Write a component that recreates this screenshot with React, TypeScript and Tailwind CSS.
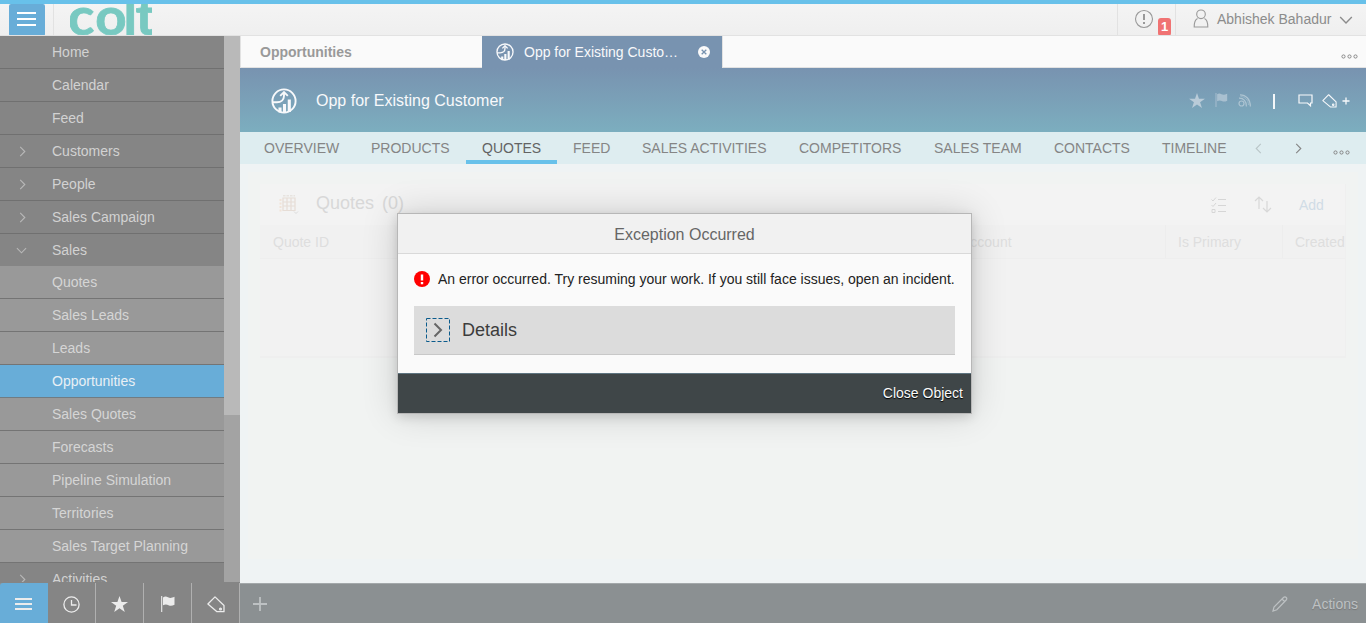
import type { ReactNode } from 'react';

type MenuItem = { label: string; kind: 'top' | 'sub' | 'active'; arrow?: 'right' | 'down' };

const menu: MenuItem[] = [
  { label: 'Home', kind: 'top' },
  { label: 'Calendar', kind: 'top' },
  { label: 'Feed', kind: 'top' },
  { label: 'Customers', kind: 'top', arrow: 'right' },
  { label: 'People', kind: 'top', arrow: 'right' },
  { label: 'Sales Campaign', kind: 'top', arrow: 'right' },
  { label: 'Sales', kind: 'top', arrow: 'down' },
  { label: 'Quotes', kind: 'sub' },
  { label: 'Sales Leads', kind: 'sub' },
  { label: 'Leads', kind: 'sub' },
  { label: 'Opportunities', kind: 'active' },
  { label: 'Sales Quotes', kind: 'sub' },
  { label: 'Forecasts', kind: 'sub' },
  { label: 'Pipeline Simulation', kind: 'sub' },
  { label: 'Territories', kind: 'sub' },
  { label: 'Sales Target Planning', kind: 'sub' },
  { label: 'Activities', kind: 'top', arrow: 'right' },
];

const sections = [
  { label: 'OVERVIEW', width: 'w-[107px]' },
  { label: 'PRODUCTS', width: 'w-[111px]' },
  { label: 'QUOTES', width: 'w-[91px]' },
  { label: 'FEED', width: 'w-[69px]' },
  { label: 'SALES ACTIVITIES', width: 'w-[157px]' },
  { label: 'COMPETITORS', width: 'w-[135px]' },
  { label: 'SALES TEAM', width: 'w-[120px]' },
  { label: 'CONTACTS', width: 'w-[108px]' },
  { label: 'TIMELINE', width: 'w-[96px]' },
];

function Hamburger({ className }: { className: string }) {
  return (
    <svg className={className} viewBox="0 0 19 15" fill="none" stroke="currentColor" strokeWidth="2">
      <path d="M0 1h19M0 7h19M0 13h19" />
    </svg>
  );
}

function Chevron({ dir, className }: { dir: 'right' | 'left' | 'down'; className: string }) {
  const d = dir === 'right' ? 'M3.5 1l5 5-5 5' : dir === 'left' ? 'M8.5 1l-5 5 5 5' : 'M1 3.5l5 5 5-5';
  return (
    <svg className={className} viewBox="0 0 12 12" fill="none" stroke="currentColor" strokeWidth="1.2">
      <path d={d} />
    </svg>
  );
}

function Star({ className }: { className: string }) {
  return (
    <svg className={className} viewBox="0 0 17 16" fill="currentColor">
      <path d="M8.5 0l2.1 6H17l-5.2 3.8L13.8 16 8.5 12.2 3.2 16l2-6.2L0 6h6.4z" />
    </svg>
  );
}

function Flag({ className }: { className: string }) {
  return (
    <svg className={className} viewBox="0 0 14 16">
      <path d="M.7 0v16" stroke="currentColor" strokeWidth="1.1" />
      <path d="M2 1.5c2-1.5 3.5-.9 5-.2s3.5 1 6.5-.5v8c-2.5 1.400-4.500 1.200-6 .4S4 8.200 2 9.300z" fill="currentColor" />
    </svg>
  );
}

function Tag({ className }: { className: string }) {
  return (
    <svg className={className} viewBox="0 0 18 17" fill="none" stroke="currentColor" strokeWidth="1.3">
      <path d="M.9 8L8 .9l9 8.600v6.200h-7z" strokeLinejoin="round" />
      <circle cx="13.500" cy="13" r=".9" />
    </svg>
  );
}

function OpportunityIcon({ className }: { className: string }) {
  return (
    <svg className={className} viewBox="0 0 26 26" fill="none" stroke="currentColor">
      <circle cx="13" cy="13" r="11.600" strokeWidth="1.900" />
      <path d="M1.500 14.200h4.500c4 0 7-2.500 7-6.500V5" strokeWidth="1.900" />
      <path d="M9.200 7.800L13 4l3.800 3.800" strokeWidth="1.900" />
      <path d="M9 19.500v5M13.500 16v8.500M18.300 11.500V24" strokeWidth="3.100" />
    </svg>
  );
}

function Dots({ className }: { className: string }) {
  return (
    <svg className={className} viewBox="0 0 17 5" fill="none" stroke="currentColor" strokeWidth="1">
      <circle cx="2.500" cy="2.500" r="1.600" />
      <circle cx="8.500" cy="2.500" r="1.600" />
      <circle cx="14.500" cy="2.500" r="1.600" />
    </svg>
  );
}

function TopBar() {
  return (
    <header className="flex h-9 shrink-0 overflow-hidden border-b border-t-4 border-b-[#e2e2e2] border-t-[#68c1ea] bg-gradient-to-b from-[#f4f4f4] to-[#efefef]">
      <div className="flex w-[54px] shrink-0 border-r border-[#e2e2e2] pl-[9px]">
        <button className="flex h-8 w-9 rounded-[2px] bg-[#68add8] pl-2 pt-2 text-white">
          <Hamburger className="h-[15px] w-[19px]" />
        </button>
      </div>
      <div className="ml-4 h-[32px] w-[82px] overflow-hidden">
        <svg className="block h-8 w-[82px]" viewBox="0 0 82 32">
          <text
            x="-2 24 51 62.500"
            y="31"
            transform="scale(1.05 1)"
            fontFamily="Lato, sans-serif"
            fontSize="52"
            fontWeight="700"
            fill="#78c9c1"
            stroke="#78c9c1"
            strokeWidth=".8"
          >
            colt
          </text>
        </svg>
      </div>
      <div className="flex-1" />
      <div className="flex w-[59px] border-x border-[#e2e2e2] pl-4">
        <svg className="mt-[5px] size-5 text-[#999]" viewBox="0 0 20 20" fill="none" stroke="currentColor">
          <circle cx="10" cy="10" r="8.500" strokeWidth="1.100" />
          <path d="M10 5v6M10 13v2" strokeWidth="2" />
        </svg>
        <span className="ml-1 mt-[14px] h-[18px] w-[13px] rounded-[3px] bg-[#f07373] text-center text-[13px] font-bold leading-[18px] text-white">1</span>
      </div>
      <div className="flex w-[190px] pl-[17px] text-[#8c8c8c]">
        <svg className="mt-[5px] h-[19px] w-4 text-[#999]" viewBox="0 0 16 19" fill="none" stroke="currentColor" strokeWidth="1.100">
          <circle cx="8" cy="5.300" r="4.300" />
          <path d="M4.500 9.600C2 10.800 1.200 12.500 1.200 18h13.600c0-5.500-.8-7.200-3.300-8.400" />
        </svg>
        <span className="ml-[7px] w-[118px] whitespace-nowrap pl-px text-sm leading-[31px]">Abhishek Bahadur</span>
        <Chevron dir="down" className="ml-[5px] mt-[9px] size-[14px]" />
      </div>
    </header>
  );
}

function Sidebar() {
  return (
    <nav className="flex h-[547px] w-60 shrink-0 bg-[#858585]">
      <ul className="h-[546px] w-56 overflow-hidden">
        {menu.map((item) => (
          <li
            key={item.label}
            className={
              'flex text-sm leading-8 ' +
              (item.label === 'Sales' ? 'h-8 ' : 'h-[33px] border-b ') +
              (item.kind === 'active'
                ? 'border-[#707c83] bg-[#68add8] text-[#e8f0f5]'
                : item.kind === 'sub'
                  ? 'border-[#747474] bg-[#999] text-[#d5d5d5]'
                  : 'border-[#707070] bg-[#858585] text-[#d2d2d2]')
            }
          >
            <span className={'flex w-[52px] items-center ' + (item.arrow === 'down' ? 'pl-4' : 'pl-[17px] pt-px')}>
              {item.arrow && <Chevron dir={item.arrow} className="size-[11px] text-[#b8b8b8]" />}
            </span>
            {item.label}
          </li>
        ))}
      </ul>
      <div className="h-[546px] w-4 bg-[#a3a3a3]">
        <div className="h-[379px] bg-[#b9b9b9]" />
      </div>
    </nav>
  );
}

function TabStrip() {
  return (
    <div className="flex h-8 shrink-0 text-sm">
      <div className="w-[242px] border-b border-l border-[#e2e2e2] bg-[#fafafa] pl-[19px] font-bold leading-8 text-[#999]">Opportunities</div>
      <div className="flex w-[240px] items-center bg-[#7893b0] pl-[14px] text-[#f8f9fb]">
        <OpportunityIcon className="size-[18px]" />
        <span className="ml-[10px] w-[162px] whitespace-nowrap leading-8">Opp for Existing Custo…</span>
        <svg className="ml-3 size-3" viewBox="0 0 12 12">
          <circle cx="6" cy="6" r="6" fill="#fafafa" />
          <path d="M3.700 3.700l4.600 4.600M8.300 3.700L3.700 8.300" stroke="#7893b0" strokeWidth="1.300" />
        </svg>
      </div>
      <div className="flex flex-1 justify-end border-b border-l border-[#e2e2e2] bg-[#fafafa] pr-2 pt-[18px] text-[#888]">
        <Dots className="h-[5px] w-[17px]" />
      </div>
    </div>
  );
}

function ObjectHeader() {
  return (
    <div className="flex h-16 shrink-0 items-center bg-gradient-to-b from-[#7893b0] to-[#7caebf] pl-[31px] text-[#f8f9fb]">
      <OpportunityIcon className="mt-[2px] size-[26px]" />
      <h1 className="ml-[19px] flex-1 pt-px text-base">Opp for Existing Customer</h1>
      <div className="flex w-[177px] items-center">
        <Star className="h-[15px] w-4 text-[#b9cbd8]" />
        <Flag className="ml-2.5 h-[14px] w-[13px] text-[#a9c0d0]" />
        <svg className="ml-[10px] mt-px size-[13px] text-[#adc4d2]" viewBox="0 0 13 13" fill="none" stroke="currentColor" strokeWidth="1.200">
          <circle cx="3.500" cy="9.500" r="2.500" />
          <path d="M1 4.200c4.500-.2 7.700 3.500 7.400 8.300M2 .8C8 .8 12.400 5.500 12.400 12.500" />
          <path d="M2.500 2.500C7 2.700 10.300 6 10.500 11" strokeWidth=".6" />
        </svg>
        <span className="ml-[22px] mt-[2px] h-[15px] w-[2px] bg-[#f4f7f9]" />
        <svg className="ml-[23px] h-[13px] w-[15px]" viewBox="0 0 15 13" fill="none" stroke="currentColor" strokeWidth="1.200">
          <path d="M1 1h13v8h-1.500v2.800L9.500 9H1z" />
        </svg>
        <Tag className="ml-[9px] mt-px h-[14px] w-[15px]" />
        <svg className="ml-[5px] mt-[2px] size-2" viewBox="0 0 8 8" stroke="currentColor" strokeWidth="1.300">
          <path d="M4 0.500v7M.5 4h7" />
        </svg>
      </div>
    </div>
  );
}

function SectionNav() {
  return (
    <div className="flex h-8 shrink-0 bg-[#deedf0] pl-2 text-sm leading-8 text-[#858585]">
      {sections.map((s) => (
        <div
          key={s.label}
          className={
            'shrink-0 whitespace-nowrap pl-4 ' +
            s.width +
            (s.label === 'QUOTES' ? ' border-b-4 border-[#68c1ea] text-[#636363]' : '')
          }
        >
          {s.label}
        </div>
      ))}
      <Chevron dir="left" className="ml-[11px] mt-[11px] size-[11px] text-[#b9c5c7]" />
      <Chevron dir="right" className="ml-[29px] mt-[11px] size-[11px] text-[#858585]" />
      <Dots className="ml-[29px] mt-[18px] h-[5px] w-[17px] text-[#858585]" />
    </div>
  );
}

function HeaderCell({ className, children }: { className: string; children?: ReactNode }) {
  return <div className={'h-full shrink-0 overflow-hidden whitespace-nowrap border-r border-[#ededed] ' + className}>{children}</div>;
}

function QuotesPanel() {
  return (
    <main className="flex-1 bg-[#eff3f4] px-2 pt-2 pb-6">
      <div className="h-full bg-[#f1f3f2] px-3 pt-3">
        <section className="h-[174px] w-[1086px] overflow-hidden border-b-2 border-r border-[#efefef] bg-[#f2f2f2]">
          <div className="flex h-[41px] bg-[#f3f3f3] pl-[19px]">
            <svg className="mt-[11px] h-[20px] w-[21px]" viewBox="0 0 21 20" fill="none">
              <path d="M1.500 4v13" stroke="#f1e3d8" strokeWidth="2" strokeDasharray="2 1.500" />
              <path d="M4 .8h12" stroke="#e2dcd6" strokeDasharray="2.500 1" />
              <path d="M4 3h12v12.500H4zM4 7h12M4 11h12M8 3v12.500M12 3v12.500" stroke="#e6ddd6" strokeWidth="1.200" />
              <path d="M15 16.500l2 2 2-2" stroke="#dcdcdc" />
            </svg>
            <span className="ml-4 w-[66px] text-lg leading-[39px] text-[#d8d8d8]">Quotes</span>
            <span className="flex-1 text-lg leading-[39px] text-[#d8d8d8]">(0)</span>
            <svg className="mt-[13px] h-[17px] w-[15px]" viewBox="0 0 15 17" fill="none" stroke="#d6d6d6">
              <path d="M.5 2.500L2 4l3-3.500M.5 8L2 9.500l3-3.500M1 12.500h3v3H1zM7 2.500h8M7 8.500h8M7 14.500h8" />
            </svg>
            <svg className="ml-7 mt-[12px] size-[18px]" viewBox="0 0 18 18" fill="none" stroke="#d8d8d8" strokeWidth="1.200">
              <path d="M5 13V1.500M1 5l4-4 4 4M13 5v11M9 12l4 4 4-4" />
            </svg>
            <span className="ml-[27px] w-[46px] text-sm leading-[43px] text-[#d0dce6]">Add</span>
          </div>
          <div className="flex h-[34px] border-b border-[#eee] bg-[#f1f1f1] text-sm leading-[34px] text-[#dedede]">
            <HeaderCell className="w-[690px] pl-[13px]">Quote ID</HeaderCell>
            <HeaderCell className="w-[216px] pl-[11px]">Account</HeaderCell>
            <HeaderCell className="w-[117px] pl-3">Is Primary</HeaderCell>
            <HeaderCell className="w-[63px] pl-3">Created</HeaderCell>
          </div>
        </section>
      </div>
    </main>
  );
}

function FooterCell({ children }: { children: ReactNode }) {
  return <div className="flex w-12 items-center justify-center border-r border-[#b0b0b0] bg-[#858585] text-[#ececec]">{children}</div>;
}

function BottomBar() {
  return (
    <footer className="flex h-10 shrink-0 bg-[#8b9092]">
      <div className="flex w-12 items-center rounded-tl-[3px] bg-[#68add8] pl-[15px] pt-[2px] text-[#ececec]">
        <svg className="h-3 w-[17px]" viewBox="0 0 17 12" stroke="currentColor" strokeWidth="1.800">
          <path d="M0 1h17M0 6h17M0 11h17" />
        </svg>
      </div>
      <FooterCell>
        <svg className="mt-[2px] size-[17px]" viewBox="0 0 17 17" fill="none" stroke="currentColor" strokeWidth="1.300">
          <circle cx="8.500" cy="8.500" r="7.600" />
          <path d="M8.500 4v5h5" />
        </svg>
      </FooterCell>
      <FooterCell><Star className="mt-[2px] h-4 w-[17px]" /></FooterCell>
      <FooterCell><Flag className="mt-[2px] h-4 w-[14px]" /></FooterCell>
      <FooterCell><Tag className="mt-[2px] h-[17px] w-[18px]" /></FooterCell>
      <div className="flex flex-1 items-center border-t border-[#a3a8aa] pr-2 text-[#bdc1c3]">
        <svg className="ml-3 size-4" viewBox="0 0 16 16" stroke="currentColor" strokeWidth="1.800">
          <path d="M8 1v14M1 8h14" />
        </svg>
        <div className="flex-1" />
        <svg className="mr-[24px] size-4" viewBox="0 0 16 16" fill="none" stroke="currentColor" strokeWidth="1.200">
          <path d="M1 15l1-4L11.500 1.500c1-1 2-.8 2.700 0s.8 1.700 0 2.500L4.800 13.700zM10 3l3 3" />
        </svg>
        <span className="text-sm [text-shadow:0_1px_1px_#777]">Actions</span>
      </div>
    </footer>
  );
}

function ErrorDialog() {
  return (
    <div role="dialog" className="absolute left-[397px] top-[213px] flex h-[201px] w-[575px] flex-col border border-[#b7b7b7] bg-[#fafafa] shadow-[0_0_34px_rgba(0,0,0,0.16),0_3px_10px_rgba(0,0,0,0.13)]">
      <h2 className="h-10 border-b border-[#d9d9d9] bg-[#f1f1f1] text-center text-base leading-[41px] text-[#666]">Exception Occurred</h2>
      <div className="flex-1 px-4">
        <p className="flex h-[52px] items-center whitespace-nowrap pb-[2px] text-sm text-[#222]">
          <svg className="mr-2 size-4 shrink-0" viewBox="0 0 16 16">
            <circle cx="8" cy="8" r="8" fill="#f00" />
            <path d="M8 3.500v6M8 11v2.200" stroke="#fff" strokeWidth="2.400" />
          </svg>
          <span>An error occurred. Try resuming your work. If you still face issues, open an incident.</span>
        </p>
        <div className="flex h-[49px] items-center border-b border-[#c8c8c8] bg-[#dcdcdc] pl-3 text-lg text-[#3c3c3c]">
          <svg className="mr-3 size-6" viewBox="0 0 24 24" fill="none">
            <rect x=".5" y=".5" width="23" height="23" stroke="#0a5b8c" strokeDasharray="4 2" />
            <path d="M8.500 5.500l6.500 6.500-6.500 6.500" stroke="#666" strokeWidth="2" />
          </svg>
          Details
        </div>
      </div>
      <div className="h-10 border-t border-[#5e7480] bg-[#3f4648] pr-2 text-right text-sm leading-[38px] text-[#fafafa] [text-shadow:0_1px_1px_#000]">Close Object</div>
    </div>
  );
}

export default function App() {
  return (
    <div className="relative flex h-[623px] w-[1366px] flex-col overflow-hidden bg-[#eff3f4] font-['Liberation_Sans',Arial,sans-serif]">
      <TopBar />
      <div className="flex h-[547px] shrink-0">
        <Sidebar />
        <div className="flex min-w-0 flex-1 flex-col">
          <TabStrip />
          <ObjectHeader />
          <SectionNav />
          <QuotesPanel />
        </div>
      </div>
      <BottomBar />
      <ErrorDialog />
    </div>
  );
}
